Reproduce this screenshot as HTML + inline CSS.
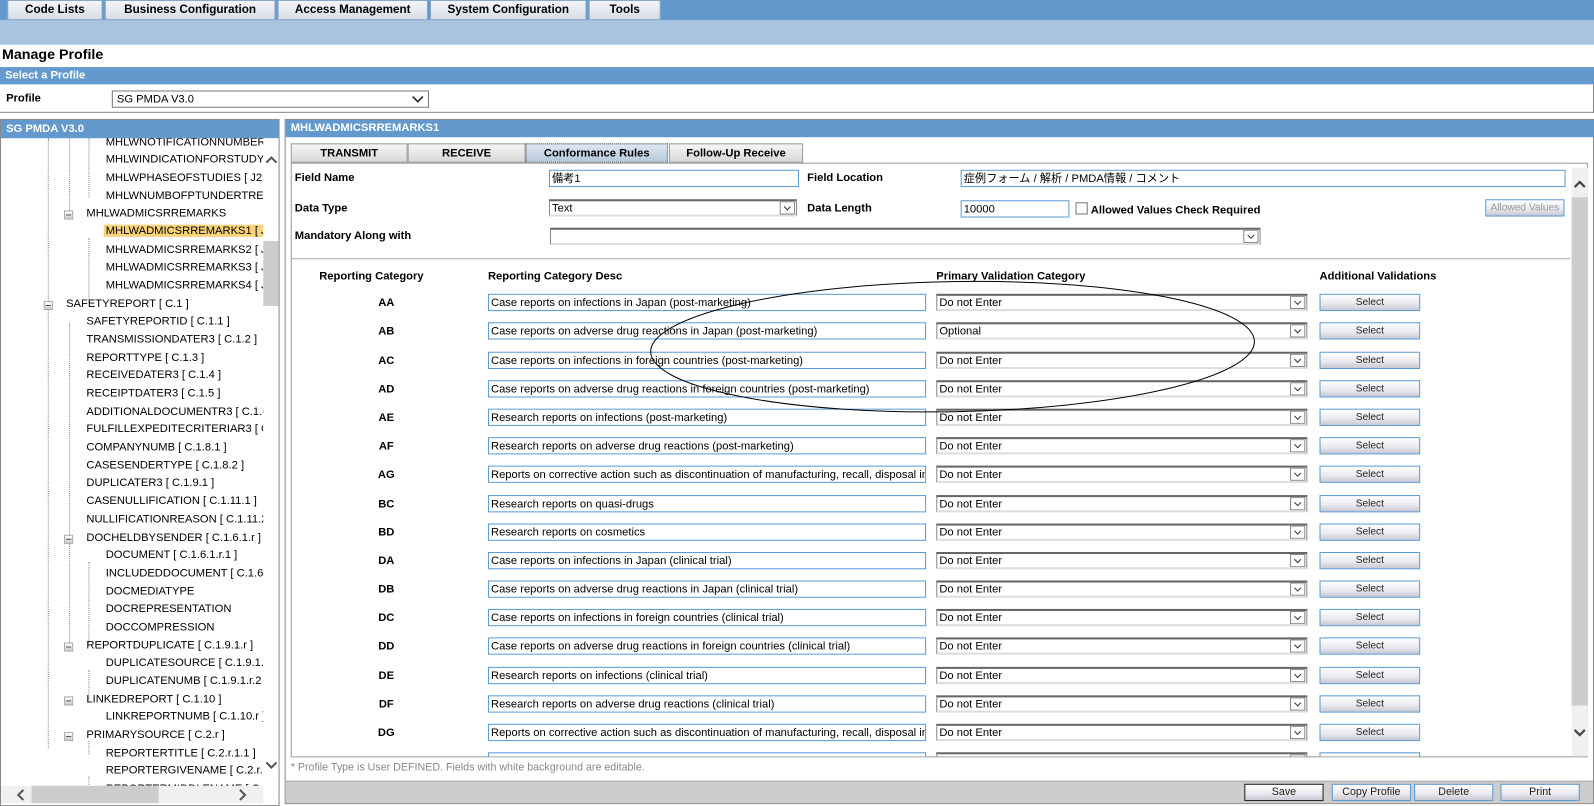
<!DOCTYPE html>
<html><head><meta charset="utf-8">
<style>
*{box-sizing:border-box;margin:0;padding:0}
body{width:1594px;height:806px;overflow:hidden;background:#fff;font-family:"Liberation Sans","Noto Sans CJK JP",Arial,sans-serif;font-size:11px;color:#000}
#w{position:absolute;left:0;top:0;width:1568px;height:793px;transform:scale(1.01658);transform-origin:0 0;overflow:hidden}
.a{position:absolute}
.nav{background:#6399cd}
.tab{position:absolute;top:0;height:20px;background:linear-gradient(#f4f6f9,#d6dde6);border:1px solid #8aa8c8;font-weight:bold;font-size:11.5px;text-align:center;line-height:19px}
.bar{background:#6399cd;color:#fff;font-weight:bold;font-size:11px;line-height:18px;padding-left:5px}
.lbl{position:absolute;font-weight:bold;font-size:11px}
.inp{position:absolute;height:17px;border:1px solid #5b9bd5;background:#fff;font-size:11px;line-height:16px;padding-left:2px;white-space:nowrap;overflow:hidden}
.sel{position:absolute;height:17px;border:1px solid #888;border-top:2px solid #666;border-bottom:2px solid #ddd;background:#fff;font-size:11px;line-height:14px;padding-left:2px;white-space:nowrap;overflow:hidden}
.dd{position:absolute;right:1px;top:0;width:15px;height:13px;border:1px solid #888;background:#fff}
.dd:after{content:"";position:absolute;left:4px;top:2px;width:4px;height:4px;border-right:1.5px solid #333;border-bottom:1.5px solid #333;transform:rotate(45deg)}
.btn{position:absolute;height:17px;border:1px solid #5b9bd5;background:linear-gradient(#fff,#e8e8ee 60%,#c8c8d4);font-size:10px;text-align:center;line-height:15px;color:#222}
.cat{position:absolute;width:60px;text-align:center;font-weight:bold;font-size:11px}
.t{position:absolute;font-size:11px;white-space:nowrap}
.ico{position:absolute;width:9px;height:9px;border:1px solid #aaa;background:linear-gradient(#fff,#ccc)}
.ico:after{content:"";position:absolute;left:1px;top:3px;width:5px;height:1px;background:#555}
.vl{position:absolute;border-left:1px dotted #888}
.tb{position:absolute;height:19px;background:linear-gradient(#f6f6f6,#d8d8d8);border:1px solid #999;font-weight:bold;font-size:11px;text-align:center;line-height:18px}
</style></head><body><div id="w">
<div class="a nav" style="left:0;top:0;width:1568px;height:20px"></div>
<div class="tab" style="left:7px;width:94px">Code Lists</div>
<div class="tab" style="left:103px;width:168px">Business Configuration</div>
<div class="tab" style="left:273px;width:148px">Access Management</div>
<div class="tab" style="left:423px;width:154px">System Configuration</div>
<div class="tab" style="left:579px;width:71px">Tools</div>
<div class="a" style="left:0;top:20px;width:1568px;height:24px;background:#a9c4de"></div>
<div class="a" style="left:2px;top:45px;font-size:14px;font-weight:bold">Manage Profile</div>
<div class="a bar" style="left:0;top:66px;width:1568px;height:17px;line-height:16px">Select a Profile</div>
<div class="a" style="left:0;top:83px;width:1568px;height:28px;border:1px solid #888;border-top:none;border-left:none"></div>
<div class="lbl" style="left:6px;top:91px">Profile</div>
<div class="a" style="left:110px;top:89px;width:312px;height:17px;border:1px solid #777;background:#fff;line-height:16px;padding-left:4px">SG PMDA V3.0<svg style="position:absolute;right:4px;top:4px" width="12" height="8"><path d="M1 1L6 6L11 1" fill="none" stroke="#222" stroke-width="1.6"/></svg></div>
<div class="a" style="left:0;top:117px;width:275px;height:676px;border:1px solid #888;overflow:hidden">
 <div class="a bar" style="left:0;top:0;width:275px;height:18px">SG PMDA V3.0</div>
 <div class="a" style="left:0;top:18px;width:258px;height:637px;overflow:hidden">
  <div class="vl" style="left:46px;top:0;height:600px"></div>
  <div class="vl" style="left:67px;top:0;height:75px"></div>
  <div class="vl" style="left:86px;top:0;height:58px"></div>
  <div class="vl" style="left:86px;top:98px;height:64px"></div>
  <div class="vl" style="left:67px;top:182px;height:320px"></div>
  <div class="vl" style="left:86px;top:417px;height:82px"></div>
  <div class="vl" style="left:86px;top:523px;height:30px"></div>
  <div class="vl" style="left:86px;top:593px;height:13px"></div>
  <div class="vl" style="left:86px;top:628px;height:20px"></div>
 </div>
 <div class="a" style="left:0;top:18px;width:258px;height:637px;overflow:hidden">
  <div class="t" style="left:103px;top:-2px">MHLWNOTIFICATIONNUMBER</div>
  <div class="t" style="left:103px;top:15px">MHLWINDICATIONFORSTUDY</div>
  <div class="t" style="left:103px;top:33px">MHLWPHASEOFSTUDIES [ J2.</div>
  <div class="t" style="left:103px;top:51px">MHLWNUMBOFPTUNDERTRE</div>
  <div class="ico" style="left:62px;top:71px"></div><div class="t" style="left:84px;top:68px">MHLWADMICSRREMARKS</div>
  <div class="t" style="left:101px;top:85px;background:#fad27a;padding:0 2px">MHLWADMICSRREMARKS1 [ J</div>
  <div class="t" style="left:103px;top:104px">MHLWADMICSRREMARKS2 [ J</div>
  <div class="t" style="left:103px;top:121px">MHLWADMICSRREMARKS3 [ J</div>
  <div class="t" style="left:103px;top:139px">MHLWADMICSRREMARKS4 [ J</div>
  <div class="ico" style="left:42px;top:160px"></div><div class="t" style="left:64px;top:157px">SAFETYREPORT [ C.1 ]</div>
  <div class="t" style="left:84px;top:174px">SAFETYREPORTID [ C.1.1 ]</div>
  <div class="t" style="left:84px;top:192px">TRANSMISSIONDATER3 [ C.1.2 ]</div>
  <div class="t" style="left:84px;top:210px">REPORTTYPE [ C.1.3 ]</div>
  <div class="t" style="left:84px;top:227px">RECEIVEDATER3 [ C.1.4 ]</div>
  <div class="t" style="left:84px;top:245px">RECEIPTDATER3 [ C.1.5 ]</div>
  <div class="t" style="left:84px;top:263px">ADDITIONALDOCUMENTR3 [ C.1.6</div>
  <div class="t" style="left:84px;top:280px">FULFILLEXPEDITECRITERIAR3 [ C</div>
  <div class="t" style="left:84px;top:298px">COMPANYNUMB [ C.1.8.1 ]</div>
  <div class="t" style="left:84px;top:316px">CASESENDERTYPE [ C.1.8.2 ]</div>
  <div class="t" style="left:84px;top:333px">DUPLICATER3 [ C.1.9.1 ]</div>
  <div class="t" style="left:84px;top:351px">CASENULLIFICATION [ C.1.11.1 ]</div>
  <div class="t" style="left:84px;top:369px">NULLIFICATIONREASON [ C.1.11.2</div>
  <div class="ico" style="left:62px;top:390px"></div><div class="t" style="left:84px;top:387px">DOCHELDBYSENDER [ C.1.6.1.r ]</div>
  <div class="t" style="left:103px;top:404px">DOCUMENT [ C.1.6.1.r.1 ]</div>
  <div class="t" style="left:103px;top:422px">INCLUDEDDOCUMENT [ C.1.6.1</div>
  <div class="t" style="left:103px;top:440px">DOCMEDIATYPE</div>
  <div class="t" style="left:103px;top:457px">DOCREPRESENTATION</div>
  <div class="t" style="left:103px;top:475px">DOCCOMPRESSION</div>
  <div class="ico" style="left:62px;top:496px"></div><div class="t" style="left:84px;top:493px">REPORTDUPLICATE [ C.1.9.1.r ]</div>
  <div class="t" style="left:103px;top:510px">DUPLICATESOURCE [ C.1.9.1.</div>
  <div class="t" style="left:103px;top:528px">DUPLICATENUMB [ C.1.9.1.r.2</div>
  <div class="ico" style="left:62px;top:549px"></div><div class="t" style="left:84px;top:546px">LINKEDREPORT [ C.1.10 ]</div>
  <div class="t" style="left:103px;top:563px">LINKREPORTNUMB [ C.1.10.r ]</div>
  <div class="ico" style="left:62px;top:584px"></div><div class="t" style="left:84px;top:581px">PRIMARYSOURCE [ C.2.r ]</div>
  <div class="t" style="left:103px;top:599px">REPORTERTITLE [ C.2.r.1.1 ]</div>
  <div class="t" style="left:103px;top:616px">REPORTERGIVENAME [ C.2.r.</div>
  <div class="t" style="left:103px;top:634px">REPORTERMIDDLENAME [ C.2.r</div>
 </div>
 <div class="a" style="left:258px;top:18px;width:16px;height:637px;background:#fff"></div>
 <div class="a" style="left:258px;top:119px;width:15px;height:64px;background:#cdcdcd"></div>
 <svg class="a" style="left:259px;top:34px" width="14" height="10"><path d="M2 8L7 3L12 8" fill="none" stroke="#555" stroke-width="2"/></svg>
 <svg class="a" style="left:259px;top:630px" width="14" height="10"><path d="M2 2L7 7L12 2" fill="none" stroke="#555" stroke-width="2"/></svg>
 <div class="a" style="left:0;top:655px;width:258px;height:17px;background:#f0f0f0"></div>
 <div class="a" style="left:30px;top:655px;width:125px;height:17px;background:#cdcdcd"></div>
 <svg class="a" style="left:15px;top:658px" width="10" height="12"><path d="M7 1L2 6L7 11" fill="none" stroke="#555" stroke-width="2"/></svg>
 <svg class="a" style="left:233px;top:658px" width="10" height="12"><path d="M2 1L7 6L2 11" fill="none" stroke="#555" stroke-width="2"/></svg>
</div>
<div class="a" style="left:280px;top:117px;width:1288px;height:674px;border:1px solid #888;background:#fff"></div>
<div class="a bar" style="left:281px;top:118px;width:1287px;height:17px;line-height:17px">MHLWADMICSRREMARKS1</div>
<div class="tb" style="left:286px;top:141px;width:115px">TRANSMIT</div>
<div class="tb" style="left:401px;top:141px;width:116px">RECEIVE</div>
<div class="tb" style="left:517px;top:141px;width:140px;background:linear-gradient(#dfe8f3,#b6c8dc);border:1px dotted #555">Conformance Rules</div>
<div class="tb" style="left:658px;top:141px;width:132px">Follow-Up Receive</div>
<div class="a" style="left:286px;top:160px;width:1276px;height:585px;border:1px solid #999"></div>
<div class="lbl" style="left:290px;top:169px">Field Name</div>
<div class="inp" style="left:540px;top:167px;width:246px">備考1</div>
<div class="lbl" style="left:794px;top:169px">Field Location</div>
<div class="inp" style="left:945px;top:167px;width:595px">症例フォーム / 解析 / PMDA情報 / コメント</div>
<div class="lbl" style="left:290px;top:199px">Data Type</div>
<div class="sel" style="left:540px;top:196px;width:244px">Text<div class="dd"></div></div>
<div class="lbl" style="left:794px;top:199px">Data Length</div>
<div class="inp" style="left:945px;top:197px;width:107px">10000</div>
<div class="a" style="left:1058px;top:199px;width:12px;height:12px;border:1px solid #777;background:#fff"></div>
<div class="lbl" style="left:1073px;top:201px">Allowed Values Check Required</div>
<div class="btn" style="left:1461px;top:196px;width:78px;color:#999">Allowed Values</div>
<div class="lbl" style="left:290px;top:226px">Mandatory Along with</div>
<div class="sel" style="left:541px;top:224px;width:699px"><div class="dd"></div></div>
<div class="a" style="left:287px;top:254px;width:1258px;height:1px;background:#aaa"></div>
<div class="a" style="left:1546px;top:165px;width:16px;height:579px;background:#f0f0f0"></div>
<div class="a" style="left:1546px;top:194px;width:16px;height:500px;background:#cdcdcd"></div>
<svg class="a" style="left:1547px;top:176px" width="14" height="10"><path d="M2 8L7 3L12 8" fill="none" stroke="#444" stroke-width="2.2"/></svg>
<svg class="a" style="left:1547px;top:716px" width="14" height="10"><path d="M2 2L7 7L12 2" fill="none" stroke="#444" stroke-width="2.2"/></svg>
<div class="lbl" style="left:314px;top:266px">Reporting Category</div>
<div class="lbl" style="left:480px;top:266px">Reporting Category Desc</div>
<div class="lbl" style="left:921px;top:266px">Primary Validation Category</div>
<div class="lbl" style="left:1298px;top:266px">Additional Validations</div>
<div class="a" style="left:287px;top:284px;width:1258px;height:460px;overflow:hidden">
<div class="cat" style="left:63px;top:8px">AA</div><div class="inp" style="left:193px;top:5px;width:431px">Case reports on infections in Japan (post-marketing)</div><div class="sel" style="left:634px;top:5px;width:365px">Do not Enter<div class="dd"></div></div><div class="btn" style="left:1011px;top:5px;width:99px">Select</div>
<div class="cat" style="left:63px;top:36px">AB</div><div class="inp" style="left:193px;top:33px;width:431px">Case reports on adverse drug reactions in Japan (post-marketing)</div><div class="sel" style="left:634px;top:33px;width:365px">Optional<div class="dd"></div></div><div class="btn" style="left:1011px;top:33px;width:99px">Select</div>
<div class="cat" style="left:63px;top:65px">AC</div><div class="inp" style="left:193px;top:62px;width:431px">Case reports on infections in foreign countries (post-marketing)</div><div class="sel" style="left:634px;top:62px;width:365px">Do not Enter<div class="dd"></div></div><div class="btn" style="left:1011px;top:62px;width:99px">Select</div>
<div class="cat" style="left:63px;top:93px">AD</div><div class="inp" style="left:193px;top:90px;width:431px">Case reports on adverse drug reactions in foreign countries (post-marketing)</div><div class="sel" style="left:634px;top:90px;width:365px">Do not Enter<div class="dd"></div></div><div class="btn" style="left:1011px;top:90px;width:99px">Select</div>
<div class="cat" style="left:63px;top:121px">AE</div><div class="inp" style="left:193px;top:118px;width:431px">Research reports on infections (post-marketing)</div><div class="sel" style="left:634px;top:118px;width:365px">Do not Enter<div class="dd"></div></div><div class="btn" style="left:1011px;top:118px;width:99px">Select</div>
<div class="cat" style="left:63px;top:149px">AF</div><div class="inp" style="left:193px;top:146px;width:431px">Research reports on adverse drug reactions (post-marketing)</div><div class="sel" style="left:634px;top:146px;width:365px">Do not Enter<div class="dd"></div></div><div class="btn" style="left:1011px;top:146px;width:99px">Select</div>
<div class="cat" style="left:63px;top:177px">AG</div><div class="inp" style="left:193px;top:174px;width:431px">Reports on corrective action such as discontinuation of manufacturing, recall, disposal in t</div><div class="sel" style="left:634px;top:174px;width:365px">Do not Enter<div class="dd"></div></div><div class="btn" style="left:1011px;top:174px;width:99px">Select</div>
<div class="cat" style="left:63px;top:206px">BC</div><div class="inp" style="left:193px;top:203px;width:431px">Research reports on quasi-drugs</div><div class="sel" style="left:634px;top:203px;width:365px">Do not Enter<div class="dd"></div></div><div class="btn" style="left:1011px;top:203px;width:99px">Select</div>
<div class="cat" style="left:63px;top:234px">BD</div><div class="inp" style="left:193px;top:231px;width:431px">Research reports on cosmetics</div><div class="sel" style="left:634px;top:231px;width:365px">Do not Enter<div class="dd"></div></div><div class="btn" style="left:1011px;top:231px;width:99px">Select</div>
<div class="cat" style="left:63px;top:262px">DA</div><div class="inp" style="left:193px;top:259px;width:431px">Case reports on infections in Japan (clinical trial)</div><div class="sel" style="left:634px;top:259px;width:365px">Do not Enter<div class="dd"></div></div><div class="btn" style="left:1011px;top:259px;width:99px">Select</div>
<div class="cat" style="left:63px;top:290px">DB</div><div class="inp" style="left:193px;top:287px;width:431px">Case reports on adverse drug reactions in Japan (clinical trial)</div><div class="sel" style="left:634px;top:287px;width:365px">Do not Enter<div class="dd"></div></div><div class="btn" style="left:1011px;top:287px;width:99px">Select</div>
<div class="cat" style="left:63px;top:318px">DC</div><div class="inp" style="left:193px;top:315px;width:431px">Case reports on infections in foreign countries (clinical trial)</div><div class="sel" style="left:634px;top:315px;width:365px">Do not Enter<div class="dd"></div></div><div class="btn" style="left:1011px;top:315px;width:99px">Select</div>
<div class="cat" style="left:63px;top:346px">DD</div><div class="inp" style="left:193px;top:343px;width:431px">Case reports on adverse drug reactions in foreign countries (clinical trial)</div><div class="sel" style="left:634px;top:343px;width:365px">Do not Enter<div class="dd"></div></div><div class="btn" style="left:1011px;top:343px;width:99px">Select</div>
<div class="cat" style="left:63px;top:375px">DE</div><div class="inp" style="left:193px;top:372px;width:431px">Research reports on infections (clinical trial)</div><div class="sel" style="left:634px;top:372px;width:365px">Do not Enter<div class="dd"></div></div><div class="btn" style="left:1011px;top:372px;width:99px">Select</div>
<div class="cat" style="left:63px;top:403px">DF</div><div class="inp" style="left:193px;top:400px;width:431px">Research reports on adverse drug reactions (clinical trial)</div><div class="sel" style="left:634px;top:400px;width:365px">Do not Enter<div class="dd"></div></div><div class="btn" style="left:1011px;top:400px;width:99px">Select</div>
<div class="cat" style="left:63px;top:431px">DG</div><div class="inp" style="left:193px;top:428px;width:431px">Reports on corrective action such as discontinuation of manufacturing, recall, disposal in t</div><div class="sel" style="left:634px;top:428px;width:365px">Do not Enter<div class="dd"></div></div><div class="btn" style="left:1011px;top:428px;width:99px">Select</div>
<div class="inp" style="left:193px;top:456px;width:431px"></div><div class="sel" style="left:634px;top:456px;width:365px"><div class="dd"></div></div><div class="btn" style="left:1011px;top:456px;width:99px"></div>
</div>
<svg class="a" style="left:0;top:0" width="1568" height="793"><ellipse cx="937" cy="341" rx="297" ry="64" transform="rotate(-1 937 341)" fill="none" stroke="#000" stroke-width="1"/></svg>
<div class="a" style="left:286px;top:749px;font-size:10.5px;color:#888">* Profile Type is User DEFINED. Fields with white background are editable.</div>
<div class="a" style="left:281px;top:768px;width:1286px;height:22px;background:#cdcdcd;border-top:1px solid #aaa"></div>
<div class="btn" style="left:1224px;top:771px;width:78px;border:1px solid #222;font-size:10.5px">Save</div>
<div class="btn" style="left:1310px;top:771px;width:78px;font-size:10.5px">Copy Profile</div>
<div class="btn" style="left:1391px;top:771px;width:78px;font-size:10.5px">Delete</div>
<div class="btn" style="left:1476px;top:771px;width:78px;font-size:10.5px">Print</div>
</div></body></html>
